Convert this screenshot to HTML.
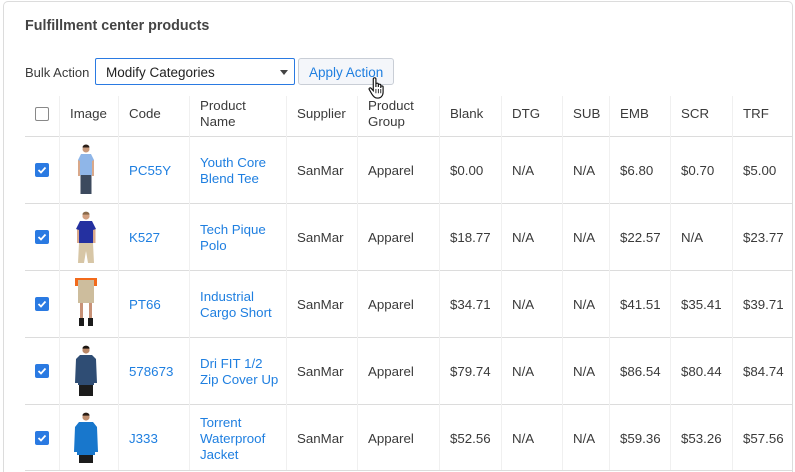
<!DOCTYPE html>
<html><head><meta charset="utf-8"><style>
*{margin:0;padding:0;box-sizing:border-box}
html{width:795px;height:472px;overflow:hidden}
body{width:795px;height:472px;background:#fff;font-family:"Liberation Sans",sans-serif;font-size:13px;color:#3a3a3a;position:relative;overflow:hidden}
.card{position:absolute;left:3px;top:1px;width:790px;height:471px;border:1px solid #dcdcdc;border-bottom:none;border-radius:5px 5px 0 0}
.a{position:absolute;white-space:nowrap}
.title{left:25px;top:18px;font-weight:bold;font-size:14.3px;color:#444}
.sel{left:95px;top:58px;width:200px;height:27px;border:1px solid #2a7ae2;border-radius:2px;padding:6px 10px;color:#222;font-size:13.5px}
.sel:after{content:"";position:absolute;right:6px;top:11px;border-left:4px solid transparent;border-right:4px solid transparent;border-top:5px solid #444}
.btn{left:298px;top:58px;width:96px;height:27px;border:1px solid #c9ced6;border-radius:3px;background:#f4f6fa;color:#1f7fe0;padding:6px 0 0 10px;font-size:13.5px}
.hl{position:absolute;left:25px;width:768px;height:1px;background:#dcdcdc}
.vl{position:absolute;top:96px;width:1px;height:374px;background:#f0f0f0}
.cb{position:absolute;left:35px;width:14px;height:14px;border-radius:2px;background:#2a7ae2}
.cb svg{position:absolute;left:2px;top:2px}
.cbe{background:#fff;border:1px solid #888}
.lk{color:#1f7fe0}
.t{position:absolute;line-height:16px;transform:translateY(-50%);margin-top:1px;font-size:13.3px}
</style></head><body>
<div class="card"></div>
<div class="a title">Fulfillment center products</div>
<div class="a" style="left:25px;top:65px">Bulk Action</div>
<div class="a sel">Modify Categories</div>
<div class="a btn">Apply Action</div>
<svg class="a" style="left:368px;top:75px" width="19" height="26" viewBox="0 0 18 24"><path d="M5 3.5c0-1.5 2.5-1.5 2.5 0V11l0-2.5c0-1.4 2.3-1.4 2.3 0V11l0-1.6c0-1.4 2.3-1.4 2.3 0V12l0-1c0-1.3 2.2-1.3 2.2 0v5c0 3-2 5.5-4.5 5.5H8.5C6.5 21.5 5 20 3.5 17.5L1.2 13.5c-.7-1.2.8-2.3 1.8-1.2L5 14.5Z" fill="#fff" stroke="#111" stroke-width="1.1"/><path d="M7.5 13v4M9.8 13v4M12.1 13v4" stroke="#111" stroke-width="0.8"/></svg>

<div class="hl" style="top:136px"></div>
<div class="hl" style="top:203px"></div>
<div class="hl" style="top:270px"></div>
<div class="hl" style="top:337px"></div>
<div class="hl" style="top:404px"></div>
<div class="hl" style="top:470px"></div>
<div class="vl" style="left:59px"></div><div class="vl" style="left:118px"></div><div class="vl" style="left:189px"></div><div class="vl" style="left:286px"></div><div class="vl" style="left:357px"></div><div class="vl" style="left:439px"></div><div class="vl" style="left:501px"></div><div class="vl" style="left:562px"></div><div class="vl" style="left:609px"></div><div class="vl" style="left:670px"></div><div class="vl" style="left:732px"></div>

<div class="cb cbe" style="top:107px"></div>
<div class="t" style="left:70px;top:113px">Image</div>
<div class="t" style="left:129px;top:113px">Code</div>
<div class="t" style="left:200px;top:113px">Product<br>Name</div>
<div class="t" style="left:297px;top:113px">Supplier</div>
<div class="t" style="left:368px;top:113px">Product<br>Group</div>
<div class="t" style="left:450px;top:113px">Blank</div>
<div class="t" style="left:512px;top:113px">DTG</div>
<div class="t" style="left:573px;top:113px">SUB</div>
<div class="t" style="left:620px;top:113px">EMB</div>
<div class="t" style="left:681px;top:113px">SCR</div>
<div class="t" style="left:743px;top:113px">TRF</div>

<div class="cb" style="top:163px"><svg width="10" height="10"><path d="M1.5 5l2.5 2.5 4.5-5" stroke="#fff" stroke-width="1.8" fill="none"/></svg></div>
<svg class="a" style="left:71px;top:144px" width="30" height="52" viewBox="0 0 30 52"><circle cx="15" cy="5" r="3.5" fill="#c99a7c"/><path d="M11.5 3.5a3.5 3 0 0 1 7 0z" fill="#2a1e18"/><rect x="12" y="12" width="2" height="24" fill="#d9a88a"/><rect x="7" y="16" width="2" height="16" fill="#d9a88a"/><rect x="21" y="16" width="2" height="16" fill="#d9a88a"/><path d="M10 10h10l3 6-2 1v14H9V17l-2-1z" fill="#8fb6e8"/><path d="M9.5 31h11v19h-11z" fill="#3c4a5e"/></svg>
<div class="t lk" style="left:129px;top:170px">PC55Y</div>
<div class="t lk" style="left:200px;top:170px">Youth Core<br>Blend Tee</div>
<div class="t" style="left:297px;top:170px">SanMar</div>
<div class="t" style="left:368px;top:170px">Apparel</div>
<div class="t" style="left:450px;top:170px">$0.00</div>
<div class="t" style="left:512px;top:170px">N/A</div>
<div class="t" style="left:573px;top:170px">N/A</div>
<div class="t" style="left:620px;top:170px">$6.80</div>
<div class="t" style="left:681px;top:170px">$0.70</div>
<div class="t" style="left:743px;top:170px">$5.00</div>

<div class="cb" style="top:230px"><svg width="10" height="10"><path d="M1.5 5l2.5 2.5 4.5-5" stroke="#fff" stroke-width="1.8" fill="none"/></svg></div>
<svg class="a" style="left:71px;top:211px" width="30" height="52" viewBox="0 0 30 52"><circle cx="15" cy="5" r="3.6" fill="#d2a080"/><path d="M11.4 3.6a3.6 3 0 0 1 7.2 0z" fill="#8a6a4a"/><rect x="6" y="18" width="2.5" height="14" fill="#d9a88a"/><rect x="22" y="18" width="2.5" height="14" fill="#d9a88a"/><path d="M9 10h12l4 8-3 1v13H8V19l-3-1z" fill="#2430a0"/><path d="M8 32h14l1 20h-6l-2-12-2 12H7z" fill="#d7c6a6"/></svg>
<div class="t lk" style="left:129px;top:237px">K527</div>
<div class="t lk" style="left:200px;top:237px">Tech Pique<br>Polo</div>
<div class="t" style="left:297px;top:237px">SanMar</div>
<div class="t" style="left:368px;top:237px">Apparel</div>
<div class="t" style="left:450px;top:237px">$18.77</div>
<div class="t" style="left:512px;top:237px">N/A</div>
<div class="t" style="left:573px;top:237px">N/A</div>
<div class="t" style="left:620px;top:237px">$22.57</div>
<div class="t" style="left:681px;top:237px">N/A</div>
<div class="t" style="left:743px;top:237px">$23.77</div>

<div class="cb" style="top:297px"><svg width="10" height="10"><path d="M1.5 5l2.5 2.5 4.5-5" stroke="#fff" stroke-width="1.8" fill="none"/></svg></div>
<svg class="a" style="left:71px;top:278px" width="30" height="52" viewBox="0 0 30 52"><rect x="4" y="0" width="22" height="8" fill="#f26a1b"/><rect x="7" y="2" width="16" height="23" fill="#cdbd9d"/><rect x="9" y="25" width="3" height="15" fill="#c89277"/><rect x="18" y="25" width="3" height="15" fill="#c89277"/><rect x="8" y="40" width="5" height="8" fill="#1b1b1b"/><rect x="17" y="40" width="5" height="8" fill="#1b1b1b"/></svg>
<div class="t lk" style="left:129px;top:304px">PT66</div>
<div class="t lk" style="left:200px;top:304px">Industrial<br>Cargo Short</div>
<div class="t" style="left:297px;top:304px">SanMar</div>
<div class="t" style="left:368px;top:304px">Apparel</div>
<div class="t" style="left:450px;top:304px">$34.71</div>
<div class="t" style="left:512px;top:304px">N/A</div>
<div class="t" style="left:573px;top:304px">N/A</div>
<div class="t" style="left:620px;top:304px">$41.51</div>
<div class="t" style="left:681px;top:304px">$35.41</div>
<div class="t" style="left:743px;top:304px">$39.71</div>

<div class="cb" style="top:364px"><svg width="10" height="10"><path d="M1.5 5l2.5 2.5 4.5-5" stroke="#fff" stroke-width="1.8" fill="none"/></svg></div>
<svg class="a" style="left:71px;top:345px" width="30" height="52" viewBox="0 0 30 52"><circle cx="15" cy="5" r="3.6" fill="#b98767"/><path d="M11.4 3.6a3.6 3 0 0 1 7.2 0z" fill="#1b1410"/><path d="M9 10h12l4 4 1 24h-3v2H7v-2H4l1-24z" fill="#2f4d74"/><rect x="8" y="40" width="14" height="11" fill="#1c1c1c"/></svg>
<div class="t lk" style="left:129px;top:371px">578673</div>
<div class="t lk" style="left:200px;top:371px">Dri FIT 1/2<br>Zip Cover Up</div>
<div class="t" style="left:297px;top:371px">SanMar</div>
<div class="t" style="left:368px;top:371px">Apparel</div>
<div class="t" style="left:450px;top:371px">$79.74</div>
<div class="t" style="left:512px;top:371px">N/A</div>
<div class="t" style="left:573px;top:371px">N/A</div>
<div class="t" style="left:620px;top:371px">$86.54</div>
<div class="t" style="left:681px;top:371px">$80.44</div>
<div class="t" style="left:743px;top:371px">$84.74</div>

<div class="cb" style="top:431px"><svg width="10" height="10"><path d="M1.5 5l2.5 2.5 4.5-5" stroke="#fff" stroke-width="1.8" fill="none"/></svg></div>
<svg class="a" style="left:71px;top:412px" width="30" height="52" viewBox="0 0 30 52"><circle cx="15" cy="5" r="3.6" fill="#c08f6f"/><path d="M11.4 3.6a3.6 3 0 0 1 7.2 0z" fill="#2a1d14"/><path d="M8 10h14l4 5 1 25h-3v3H6v-3H3l1-25z" fill="#1877cc"/><rect x="8" y="43" width="14" height="8" fill="#1c1c1c"/></svg>
<div class="t lk" style="left:129px;top:438px">J333</div>
<div class="t lk" style="left:200px;top:438px">Torrent<br>Waterproof<br>Jacket</div>
<div class="t" style="left:297px;top:438px">SanMar</div>
<div class="t" style="left:368px;top:438px">Apparel</div>
<div class="t" style="left:450px;top:438px">$52.56</div>
<div class="t" style="left:512px;top:438px">N/A</div>
<div class="t" style="left:573px;top:438px">N/A</div>
<div class="t" style="left:620px;top:438px">$59.36</div>
<div class="t" style="left:681px;top:438px">$53.26</div>
<div class="t" style="left:743px;top:438px">$57.56</div>
</body></html>
